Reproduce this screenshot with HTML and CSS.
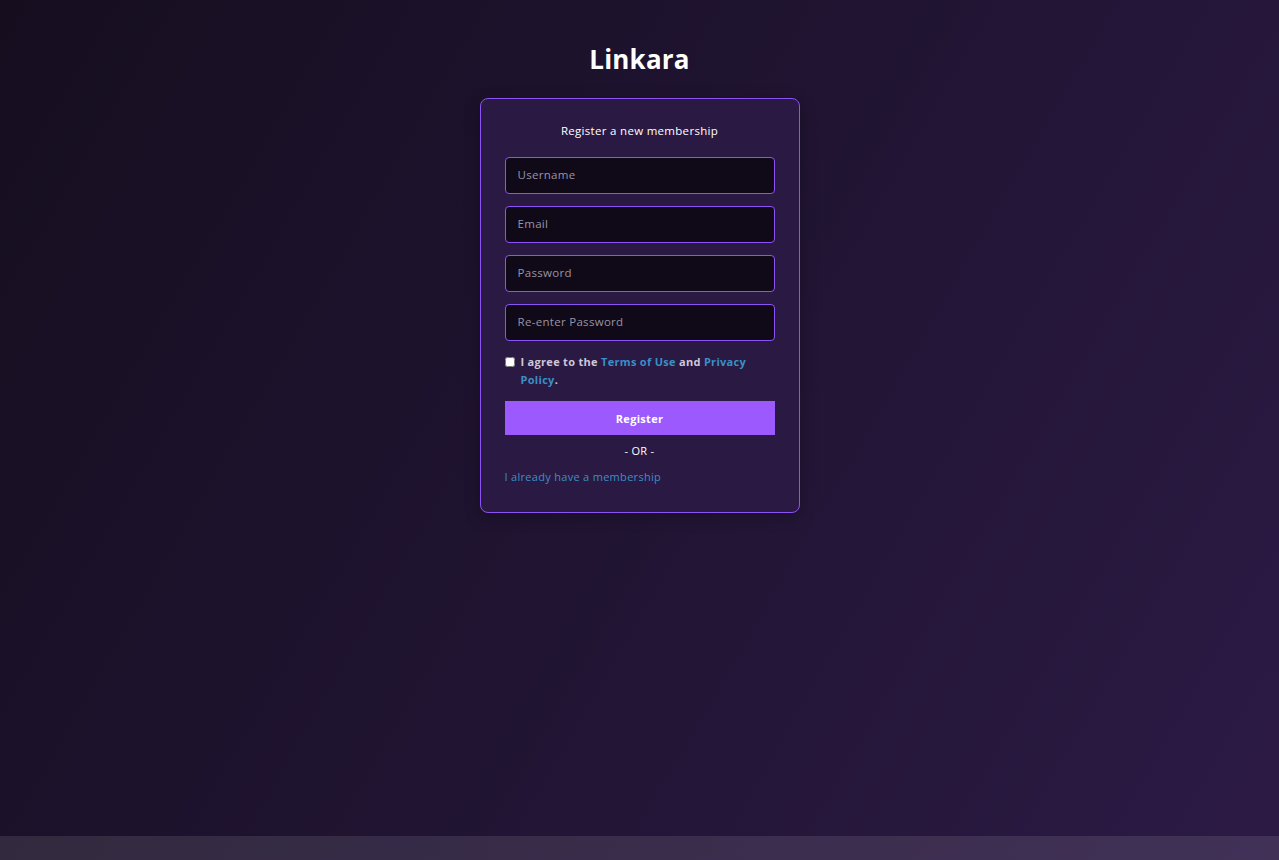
FILE: index.html
```html
<!DOCTYPE html>
<html lang="en">
<head>
    <meta charset="UTF-8">
    <meta name="viewport" content="width=device-width, initial-scale=1.0">
    <title>Register - Linkara</title>
    <link rel="stylesheet" href="styles.css">
</head>
<body>
    <main class="page">
        <h1 class="brand">Linkara</h1>

        <div class="card">
            <p class="card-title">Register a new membership</p>

            <form id="registerForm">
                <input type="text" placeholder="Username">
                <input type="email" placeholder="Email">
                <input type="password" placeholder="Password">
                <input type="password" placeholder="Re-enter Password">

                <label class="agree">
                    <input type="checkbox">
                    <span>I agree to the <a href="#">Terms of Use</a> and <a href="#">Privacy Policy</a>.</span>
                </label>

                <button type="submit">Register</button>
            </form>

            <p class="or">- OR -</p>
            <a class="login-link" href="#">I already have a membership</a>
        </div>
    </main>

    <footer class="footer"></footer>
</body>
</html>
```

FILE: styles.css
```css
html, body {
    height: 100%;
}

body {
    font-family: "Open Sans", "Noto Sans", sans-serif;
    margin: 0;
    padding: 0;
    color: #fff;
    letter-spacing: 0.3px;
    background: linear-gradient(120deg, #160e1f 0%, #201432 50%, #2c1a45 100%);
    display: flex;
    flex-direction: column;
}

.page {
    flex: 1;
    display: flex;
    flex-direction: column;
    align-items: center;
}

.brand {
    margin: 41px 0 21px;
    font-size: 26px;
    font-weight: 700;
    line-height: 36px;
    letter-spacing: 0.2px;
}

.card {
    width: 270px;
    padding: 23px 24px 27px;
    background-color: #2a1942;
    border: 1px solid #8d52f5;
    border-radius: 8px;
    box-shadow: 0 4px 16px rgba(0, 0, 0, 0.25);
}

.card-title {
    margin: 0 0 17px;
    text-align: center;
    font-size: 11.5px;
    line-height: 18px;
}

form {
    display: flex;
    flex-direction: column;
    gap: 12px;
}

form input[type="text"],
form input[type="email"],
form input[type="password"] {
    height: 37px;
    padding: 0 12px 2px;
    box-sizing: border-box;
    background-color: #100a18;
    border: 1px solid #8d52f5;
    border-radius: 4px;
    color: #fff;
    font-family: inherit;
    font-size: 11.5px;
    letter-spacing: 0.3px;
    outline: none;
}

form input::placeholder {
    color: #9a93a3;
}

.agree {
    display: flex;
    align-items: flex-start;
    gap: 6px;
    font-size: 11px;
    font-weight: 700;
    line-height: 18px;
    color: #cfc7d8;
}

.agree input {
    width: 10px;
    height: 10px;
    margin: 4px 0 0;
    flex-shrink: 0;
}

.agree a,
.login-link {
    color: #3a8fc7;
    text-decoration: none;
}

button {
    height: 34px;
    background-color: #9b59fe;
    color: #fff;
    border: none;
    font-family: inherit;
    font-size: 11px;
    font-weight: 700;
    letter-spacing: 0.3px;
    cursor: pointer;
}

.or {
    margin: 8px 0 0;
    text-align: center;
    font-size: 11px;
    line-height: 16px;
}

.login-link {
    display: block;
    margin-top: 10px;
    font-size: 11px;
    line-height: 16px;
}

.footer {
    height: 24px;
    background-color: rgba(255, 255, 255, 0.1);
}
```
